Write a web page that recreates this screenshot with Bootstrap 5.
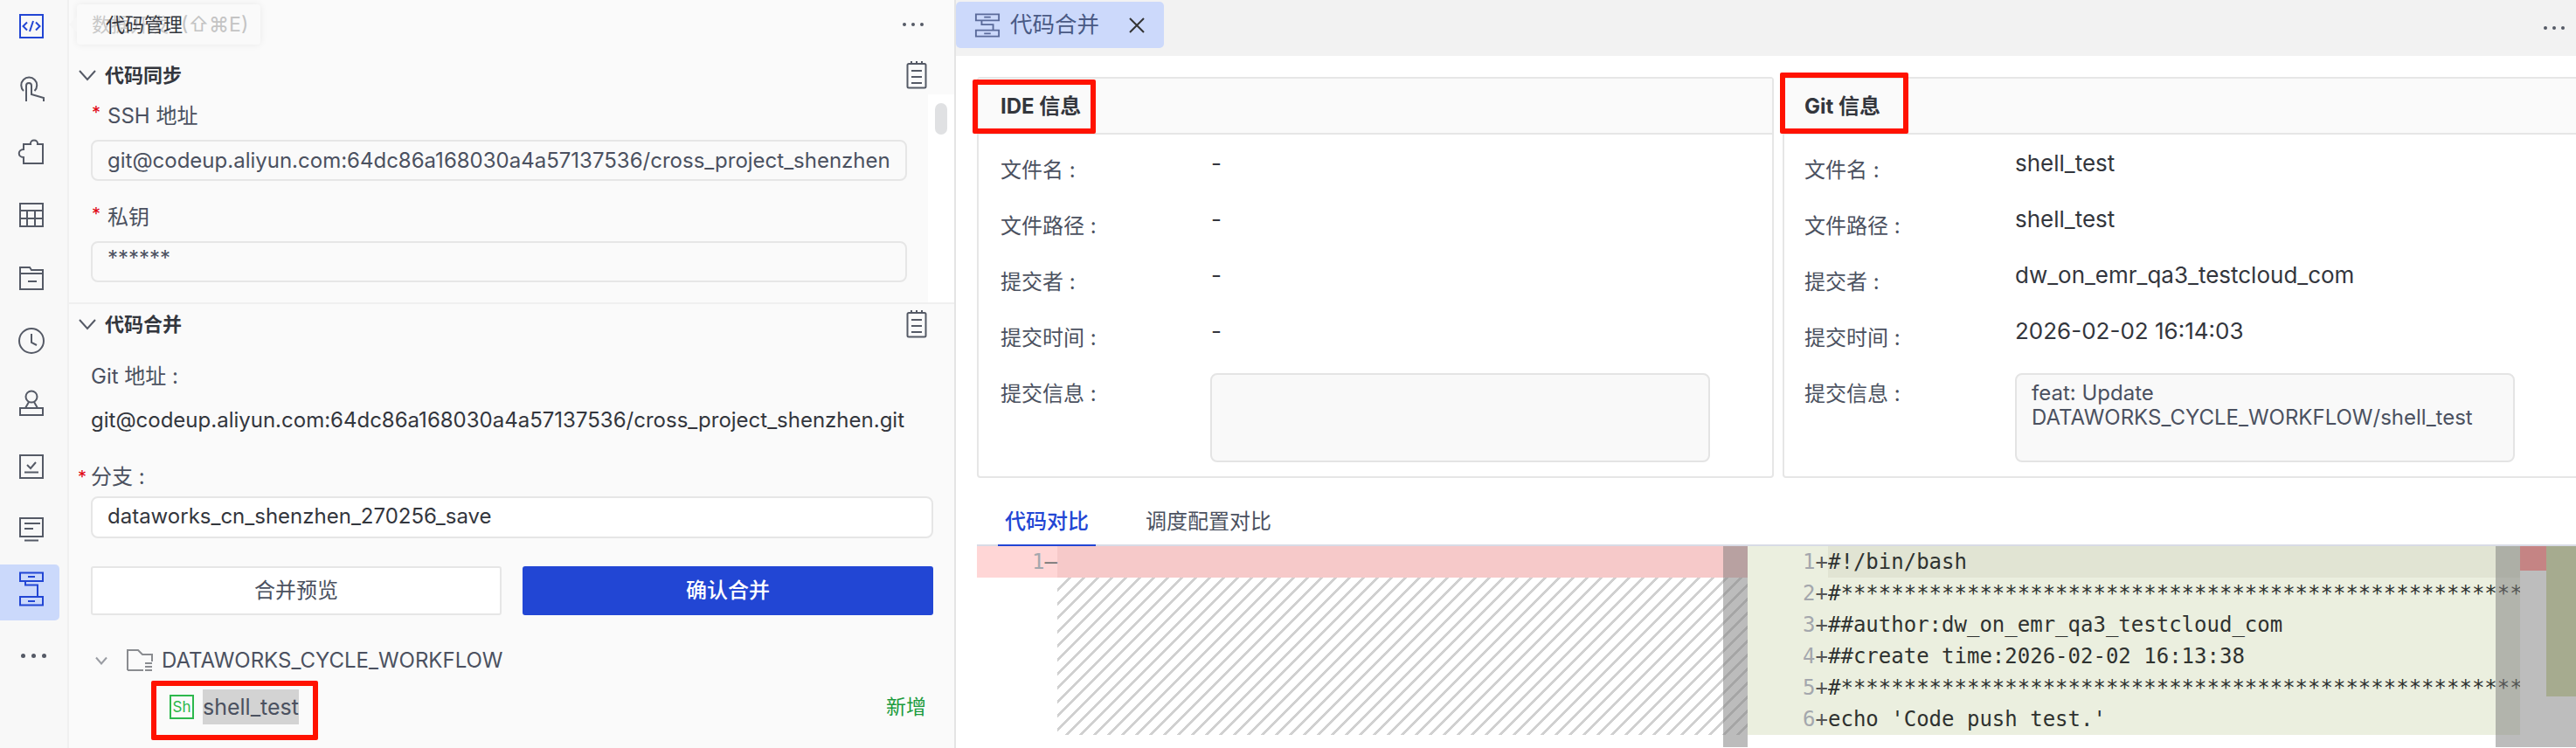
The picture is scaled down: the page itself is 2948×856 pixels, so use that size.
<!DOCTYPE html>
<html lang="zh">
<head>
<meta charset="utf-8">
<title>代码合并</title>
<link href="https://cdn.jsdelivr.net/npm/bootstrap@5.3.0/dist/css/bootstrap.min.css" rel="stylesheet">
<style>
html,body{height:856px;overflow:hidden;background:#fff}
body{position:relative;font-family:Inter,"Noto Sans CJK SC",sans-serif;font-size:24px;color:#4b5160;width:2948px}
.shell{height:856px}
svg{display:block;fill:none;stroke:#555a66;stroke-width:2}
.rail{width:79px;flex:none;background:#f8f8f8;border-right:2px solid #f0f0f0;height:856px}
.rail-inner{margin-top:-2px;width:68px}
.rail-cell{height:64px;margin-bottom:8px;border-radius:0 5px 5px 0;padding-left:20px}
.rail-active{background:#cbd9fb}
.rail-active svg{stroke:#2246d4;margin-bottom:9px}
.blue-svg{stroke:#2246d4}
.dots{gap:6px}
.dots i{width:4px;height:4px;border-radius:50%;background:#555a66;display:block}
.rail-cell.dots{gap:7px}
.rail-cell.dots i{width:5px;height:5px}
.panel{width:1015px;flex:none;background:#fafafa;border-right:2px solid #e4e4e4;height:856px}
.top-bar{height:64px;padding:0 35px 8px 0}
.sec-head{height:44px;padding:0 31px 0 11px}
.sec-head-b{height:46px}
.sec-title{font-weight:700;font-size:22px;color:#33363d;line-height:44px;margin-left:10px}
.sec-body{height:240px;border-bottom:2px solid #f0f0f0}
.sec-form{width:983px;padding:8px 24px 0 25px}
.sec-strip{width:30px;background:#fff;padding:10px 8px}
.thumb{height:36px;background:#e0e1e3;border-radius:7px}
.fld-label{height:32px;line-height:34px;position:relative}
.star{color:#e00010;position:absolute;left:-15px;top:0;font-size:20px}
.star-in{left:1px;top:-4px}
.lbl-in{padding-left:19px}
.fld{height:47px;border:2px solid #e6e6e6;border-radius:8px;padding:0 18px 0 17px;line-height:44px;white-space:nowrap;overflow:hidden;margin-top:12px;margin-bottom:25px;background:#fafafa}
.fld-pw{line-height:36px}
.fld-white{background:#fff;color:#33363d;margin-top:7px;height:48px;margin-bottom:32px;line-height:42px}
.merge-body{padding:20px 0 0 25px;width:989px}
.url{height:32px;line-height:30px;margin:20px 0 31px;color:#33363d;white-space:nowrap}
.btn-row{gap:24px;height:56px}
.btn-plain,.btn-main{width:470px;height:56px;border-radius:3px;font-size:24px;padding:0;line-height:50px}
.btn-plain{background:#fff;border:2px solid #e6e6e6;color:#4b5160}
.btn-main{background:#2246d4;border:2px solid #2246d4;color:#fff;font-weight:500}
.tree-row{height:48px;margin-top:28px;padding-left:5px}
.tree-fold{margin-left:22px}
.tree-name{margin-left:10px}
.file-row{height:40px;margin-top:9px;padding-left:90px;padding-right:8px}
.sh-ico{width:28px;height:28px;border:2px solid #2db84d;color:#2db84d;font-size:17px;line-height:24px;text-align:center;margin-right:10px}
.sel-text{background:#d3d3d3;line-height:40px;height:40px;width:110px;font-size:25px;white-space:nowrap}
.add-tag{margin-left:auto;color:#1a9a3c;font-size:23px}
.main{flex:1;min-width:0;height:856px;overflow:hidden}
.tab-bar{height:64px;background:#f2f2f2;padding-right:13px}
.tab-item{width:238px;height:53px;margin-top:2px;background:#ccd9fb;border-radius:5px;padding-left:21px;color:#4a5a85;font-size:25.5px;align-self:flex-start}
.tab-item svg{stroke:#5a6a9a}
.tab-title{margin-left:11px}
.tab-x{margin-left:33px}
.info-row{padding:24px 0 0 24px;gap:10px;width:1854px}
.info{border:2px solid #e6e6e6;border-radius:4px;height:459px;flex:none;--bs-card-bg:#fff}
.info-a{width:912px}
.info-b{width:920px}
.info .card-header{height:64px;background:#fafafa;border-bottom:2px solid #e6e6e6;border-radius:0;padding:0 25px;font-weight:700;color:#33363d;font-size:24px;line-height:63px}
.info-b .card-header{padding:0 23px}
.info-rows{padding:9px 25px 0}
.info-b .info-rows{padding:9px 23px 0}
.info-line{height:64px}
.info-k{width:241px;flex:none;font-size:24px;padding-top:16px;line-height:32px}
.info-v{padding-top:8px;line-height:32px;color:#33363d;font-size:26px}
.info-a .msg{margin-left:-1px}
.msg{width:572px;height:102px;margin-top:8px;border:2px solid #e4e4e4;border-radius:8px;background:#f9f9f9;padding:7px 17px;line-height:28px;font-size:24px}
.cmp-tabs{height:60px;margin:18px 0 0 24px;border-bottom:2px solid #d8dbe6;padding-left:24px;gap:57px;font-size:24px}
.cmp-on{color:#2246d4;font-weight:500;height:60px;line-height:64px;position:relative;padding:0 8px}
.cmp-on::after{content:"";position:absolute;left:0;right:0;bottom:-2px;height:4px;background:#2246d4}
.cmp-off{line-height:64px;height:60px}
.diff{height:230px;margin-left:24px;font-family:"DejaVu Sans Mono",monospace;font-size:24px;position:relative}
.d-side{height:216px;position:relative;overflow:hidden;flex:none}
.d-left{width:882px}
.d-right{width:884px}
.d-row{height:36px;line-height:36px;white-space:pre}
.gut{width:92px;flex:none;text-align:right;color:#a4a7ad}
.gut b{font-weight:400;color:#555}
.r-del{background:#f6c9c9}
.r-del .gut{background:#ffd6d6}
.r-del .gut b{color:#777}
.hatch{margin-left:92px;height:180px;background-image:linear-gradient(-45deg,#d0d0d0 12.5%,transparent 12.5%,transparent 50%,#d0d0d0 50%,#d0d0d0 62.5%,transparent 62.5%,transparent 100%);background-size:16px 16px}
.d-right{background:#ebefdf;color:#2f3230}
.r-hi .cod{background:#e1e4d3}
.cod{flex:1;overflow:hidden}
.slide{position:absolute;top:0;width:28px;height:230px;background:rgba(121,121,121,.5)}
.slide-a{left:854px}
.slide-b{left:1738px}
.ov{width:64px;flex:none;height:230px;background:#bdbdbd}
.ov-a{width:30px}
.ov-a i{display:block;height:28px;background:#c58484}
.ov-b{width:34px;height:172px;background:#a6ab8f}
.tip{position:absolute;left:88px;top:5px;width:210px;height:46px;background:#fafafa;border-radius:4px;box-shadow:0 0 8px rgba(0,0,0,.07);line-height:46px;white-space:nowrap;z-index:3;font-size:22px}
.tip::before{content:"";position:absolute;left:-9px;top:14px;border:9px solid transparent;border-left:0;border-right-color:#f6f6f6}
.tip-ghost{position:absolute;left:17px;top:0;color:#c8c8c8}
.tip-main{position:absolute;left:33px;top:0;color:#33363d}
.tip-key{position:absolute;left:119px;top:0;color:#c4c4c4;font-size:23px}
.mark-box{position:absolute;border:6px solid #ff1200;border-radius:2px;z-index:4}
.mk-a{left:1113px;top:91px;width:141px;height:62px}
.mk-b{left:2037px;top:83px;width:147px;height:70px}
.mk-c{left:173px;top:779px;width:191px;height:68px}
</style>
</head>
<body>
<div class="shell d-flex">
  <div class="rail">
    <div class="rail-inner">
      <div class="rail-cell d-flex align-items-center"><svg class="blue-svg" width="32" height="32" viewBox="0 0 32 32"><rect x="3" y="3" width="26" height="26"/><path d="M11 11.5 6.5 16l4.5 4.5M21 11.5l4.5 4.5-4.5 4.5M18 10l-4 12"/></svg></div>
      <div class="rail-cell d-flex align-items-center"><svg width="32" height="32" viewBox="0 0 32 32"><path d="M7 18A9 9 0 1 1 19.500 18M10 30V12a3 3 0 0 1 6 0V22l14 4v4"/></svg></div>
      <div class="rail-cell d-flex align-items-center"><svg width="32" height="32" viewBox="0 0 32 32"><path d="M7 29H29V7H23c1-6-9-6-8 0H7v6c-7 0-7 9 0 9z"/></svg></div>
      <div class="rail-cell d-flex align-items-center"><svg width="32" height="32" viewBox="0 0 32 32"><path d="M3 3H29V29H3zM3 11H29M3 20H29M11 11V29M20 11V29"/></svg></div>
      <div class="rail-cell d-flex align-items-center"><svg width="32" height="32" viewBox="0 0 32 32"><path d="M3 29V4H14l2 3H29V29zM3 11H29M12 20H22"/></svg></div>
      <div class="rail-cell d-flex align-items-center"><svg width="32" height="32" viewBox="0 0 32 32"><circle cx="16" cy="16" r="14"/><path d="M16 8V18L22 21"/></svg></div>
      <div class="rail-cell d-flex align-items-center"><svg width="32" height="32" viewBox="0 0 32 32"><circle cx="16" cy="8" r="6.500"/><path d="M13 14 9 21M19 14l4 7M3 21H29V29H3z"/></svg></div>
      <div class="rail-cell d-flex align-items-center"><svg width="32" height="32" viewBox="0 0 32 32"><rect x="3" y="3" width="26" height="26"/><path d="M11 14l4 4 6-7M8 22.500H24"/></svg></div>
      <div class="rail-cell d-flex align-items-center"><svg width="32" height="32" viewBox="0 0 32 32"><rect x="3" y="3" width="26" height="21"/><path d="M8 9H26M8 15H18M8 28.500H24"/></svg></div>
      <div class="rail-cell rail-active d-flex align-items-center"><svg width="32" height="40" viewBox="0 0 32 40"><path d="M3 1.500H29V11H3zM3 29H29V38.500H3zM12 6H20M12 34H20M9 11V15.500H23V29"/></svg></div>
      <div class="rail-cell d-flex align-items-center dots"><i class="ms-1"></i><i></i><i></i></div>
    </div>
  </div>

  <div class="panel">
    <div class="top-bar d-flex justify-content-end align-items-center dots"><i></i><i></i><i></i></div>

    <div class="sec-head d-flex align-items-center justify-content-between">
      <div class="d-flex align-items-center"><svg width="20" height="14" viewBox="0 0 20 14"><path d="M1 2l9 10 9-10"/></svg><span class="sec-title">代码同步</span></div>
      <svg width="24" height="32" viewBox="0 0 24 32"><path d="M3 3H21a1.500 1.500 0 0 1 1.500 1.500V29a1.500 1.500 0 0 1-1.500 1.500H3A1.500 1.500 0 0 1 1.500 29V4.500A1.500 1.500 0 0 1 3 3zM6 11H18M6 18H18M6 25H18M6 0V3M12 0V3M18 0V3"/></svg>
    </div>
    <div class="sec-body d-flex">
      <div class="sec-form">
        <div class="fld-label lbl-in"><span class="star star-in">*</span>SSH 地址</div>
        <div class="fld">git@codeup.aliyun.com:64dc86a168030a4a57137536/cross_project_shenzhen</div>
        <div class="fld-label lbl-in"><span class="star star-in">*</span>私钥</div>
        <div class="fld fld-pw">******</div>
      </div>
      <div class="sec-strip"><div class="thumb"></div></div>
    </div>

    <div class="sec-head sec-head-b d-flex align-items-center justify-content-between">
      <div class="d-flex align-items-center"><svg width="20" height="14" viewBox="0 0 20 14"><path d="M1 2l9 10 9-10"/></svg><span class="sec-title">代码合并</span></div>
      <svg width="24" height="32" viewBox="0 0 24 32"><path d="M3 3H21a1.500 1.500 0 0 1 1.500 1.500V29a1.500 1.500 0 0 1-1.500 1.500H3A1.500 1.500 0 0 1 1.500 29V4.500A1.500 1.500 0 0 1 3 3zM6 11H18M6 18H18M6 25H18M6 0V3M12 0V3M18 0V3"/></svg>
    </div>
    <div class="merge-body">
      <div class="fld-label">Git 地址 :</div>
      <div class="url">git@codeup.aliyun.com:64dc86a168030a4a57137536/cross_project_shenzhen.git</div>
      <div class="fld-label"><span class="star">*</span>分支 :</div>
      <div class="fld fld-white">dataworks_cn_shenzhen_270256_save</div>
      <div class="btn-row d-flex">
        <button type="button" class="btn btn-plain">合并预览</button>
        <button type="button" class="btn btn-main">确认合并</button>
      </div>
      <div class="tree-row d-flex align-items-center">
        <svg width="14" height="10" viewBox="0 0 14 10" style="stroke:#9a9da3"><path d="M1 1.500l6 7 6-7"/></svg>
        <svg class="tree-fold" width="30" height="26" viewBox="0 0 30 26" style="stroke:#8a8c90"><path d="M1 24V1H13L18 6H29V14M1 24H19M21 16H29M21 20H29M21 24H29"/></svg>
        <span class="tree-name">DATAWORKS_CYCLE_WORKFLOW</span>
      </div>
      <div class="file-row d-flex align-items-center">
        <span class="sh-ico">Sh</span>
        <span class="sel-text">shell_test</span>
        <span class="add-tag">新增</span>
      </div>
    </div>
  </div>

  <div class="main">
    <div class="tab-bar d-flex justify-content-between align-items-center">
      <div class="tab-item d-flex align-items-center">
        <svg width="30" height="30" viewBox="0 0 32 30"><path d="M2 1.500H30V9H2zM2 21H30V28.500H2zM12 5H20M12 25H20M9 9V14H23V21"/></svg>
        <span class="tab-title">代码合并</span>
        <svg class="tab-x" width="20" height="20" viewBox="0 0 20 20" style="stroke:#333"><path d="M2 2 18 18M18 2 2 18"/></svg>
      </div>
      <div class="d-flex dots"><i></i><i></i><i></i></div>
    </div>

    <div class="info-row d-flex">
      <div class="card info info-a">
        <div class="card-header">IDE 信息</div>
        <div class="info-rows">
          <div class="info-line d-flex"><div class="info-k">文件名 :</div><div class="info-v">-</div></div>
          <div class="info-line d-flex"><div class="info-k">文件路径 :</div><div class="info-v">-</div></div>
          <div class="info-line d-flex"><div class="info-k">提交者 :</div><div class="info-v">-</div></div>
          <div class="info-line d-flex"><div class="info-k">提交时间 :</div><div class="info-v">-</div></div>
          <div class="d-flex"><div class="info-k">提交信息 :</div><div class="msg"></div></div>
        </div>
      </div>
      <div class="card info info-b">
        <div class="card-header">Git 信息</div>
        <div class="info-rows">
          <div class="info-line d-flex"><div class="info-k">文件名 :</div><div class="info-v">shell_test</div></div>
          <div class="info-line d-flex"><div class="info-k">文件路径 :</div><div class="info-v">shell_test</div></div>
          <div class="info-line d-flex"><div class="info-k">提交者 :</div><div class="info-v">dw_on_emr_qa3_testcloud_com</div></div>
          <div class="info-line d-flex"><div class="info-k">提交时间 :</div><div class="info-v">2026-02-02 16:14:03</div></div>
          <div class="d-flex"><div class="info-k">提交信息 :</div><div class="msg">feat: Update<br>DATAWORKS_CYCLE_WORKFLOW/shell_test</div></div>
        </div>
      </div>
    </div>

    <div class="cmp-tabs d-flex">
      <div class="cmp-on">代码对比</div>
      <div class="cmp-off">调度配置对比</div>
    </div>

    <div class="diff d-flex">
      <div class="d-side d-left">
        <div class="d-row r-del d-flex"><div class="gut">1<b>—</b></div></div>
        <div class="hatch"></div>
      </div>
      <div class="d-side d-right">
        <div class="d-row r-hi d-flex"><div class="gut">1<b>+</b></div><div class="cod">#!/bin/bash</div></div>
        <div class="d-row d-flex"><div class="gut">2<b>+</b></div><div class="cod">#*****************************************************************</div></div>
        <div class="d-row d-flex"><div class="gut">3<b>+</b></div><div class="cod">##author:dw_on_emr_qa3_testcloud_com</div></div>
        <div class="d-row d-flex"><div class="gut">4<b>+</b></div><div class="cod">##create time:2026-02-02 16:13:38</div></div>
        <div class="d-row d-flex"><div class="gut">5<b>+</b></div><div class="cod">#*****************************************************************</div></div>
        <div class="d-row d-flex"><div class="gut">6<b>+</b></div><div class="cod">echo 'Code push test.'</div></div>
      </div>
      <div class="ov d-flex"><div class="ov-a"><i></i></div><div class="ov-b"></div></div>
      <div class="slide slide-a"></div>
      <div class="slide slide-b"></div>
    </div>
  </div>
</div>

<div class="tip"><span class="tip-ghost">数据开发</span><span class="tip-main">代码管理</span><span class="tip-key">(⇧⌘E)</span></div>
<div class="mark-box mk-a"></div>
<div class="mark-box mk-b"></div>
<div class="mark-box mk-c"></div>
<script src="https://cdn.jsdelivr.net/npm/bootstrap@5.3.0/dist/js/bootstrap.bundle.min.js"></script>
</body>
</html>
